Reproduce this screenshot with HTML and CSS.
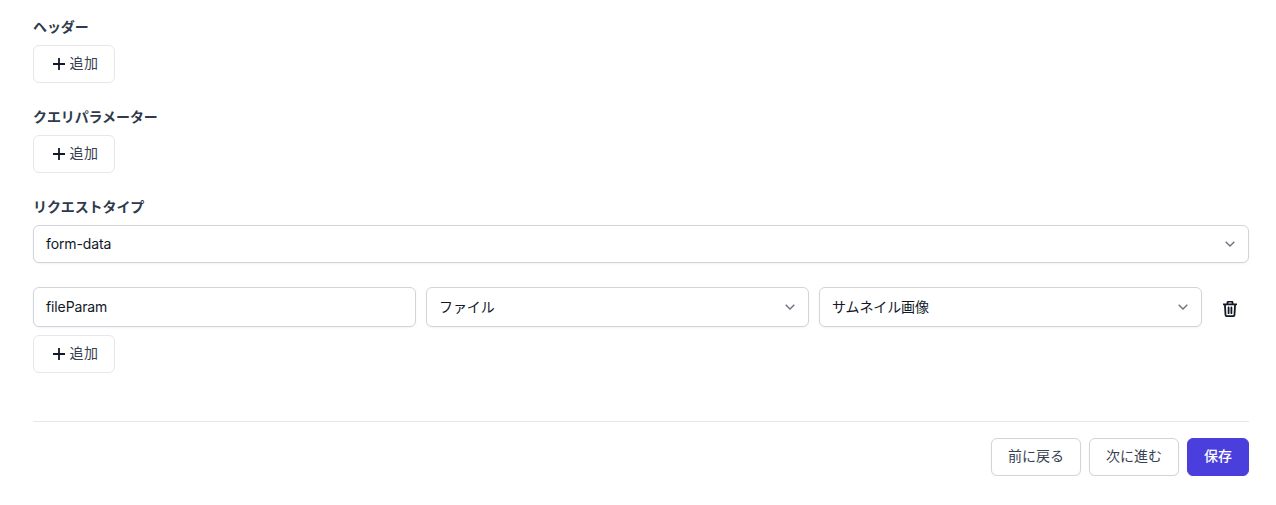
FILE: index.html
```html
<!DOCTYPE html>
<html lang="ja">
<head>
    <meta charset="UTF-8">
    <title>リクエスト設定</title>
    <link rel="stylesheet" href="styles.css">
</head>
<body>
    <div class="container">
        <div class="field-group">
            <div class="field-label">ヘッダー</div>
            <button class="add-btn">
                <svg class="plus-icon" viewBox="0 0 14 14"><path d="M7 1v12M1 7h12"/></svg>
                <span class="btn-text">追加</span>
            </button>
        </div>

        <div class="field-group">
            <div class="field-label">クエリパラメーター</div>
            <button class="add-btn">
                <svg class="plus-icon" viewBox="0 0 14 14"><path d="M7 1v12M1 7h12"/></svg>
                <span class="btn-text">追加</span>
            </button>
        </div>

        <div class="field-group">
            <div class="field-label">リクエストタイプ</div>
            <div class="select full">
                <span class="value">form-data</span>
                <svg class="chevron" viewBox="0 0 10 6"><path d="M.7.8 5 5 9.300.8"/></svg>
            </div>
        </div>

        <div class="param-row">
            <div class="text-input"><span class="value">fileParam</span></div>
            <div class="select">
                <span class="value">ファイル</span>
                <svg class="chevron" viewBox="0 0 10 6"><path d="M.7.8 5 5 9.300.8"/></svg>
            </div>
            <div class="select">
                <span class="value">サムネイル画像</span>
                <svg class="chevron" viewBox="0 0 10 6"><path d="M.7.8 5 5 9.300.8"/></svg>
            </div>
            <button class="delete-btn">
                <svg class="trash-icon" viewBox="0 0 14 16">
                    <path d="M.5 3.300h13M4.500 3.300V1.600c0-.5.4-.9.9-.9h3.200c.5 0 .9.4.9.9v1.700M1.900 3.300l.6 10.400c0 .8.7 1.500 1.500 1.500h6c.8 0 1.500-.7 1.500-1.500l.6-10.400M5.600 6.500v5.700M8.400 6.500v5.700"/>
                </svg>
            </button>
        </div>
        <button class="add-btn">
            <svg class="plus-icon" viewBox="0 0 14 14"><path d="M7 1v12M1 7h12"/></svg>
            <span class="btn-text">追加</span>
        </button>

        <div class="footer">
            <button class="footer-btn"><span class="btn-text">前に戻る</span></button>
            <button class="footer-btn"><span class="btn-text">次に進む</span></button>
            <button class="footer-btn primary"><span class="btn-text">保存</span></button>
        </div>
    </div>
</body>
</html>
```

FILE: styles.css
```css
* {
    box-sizing: border-box;
}

body {
    margin: 0;
    background: white;
    font-family: Inter, "Noto Sans CJK JP", sans-serif;
    font-size: 14px;
    color: #111827;
}

.container {
    padding: 17px 27px 0 33px;
}

.field-group {
    margin-bottom: 24px;
}

.field-label {
    height: 20px;
    line-height: 19px;
    margin-bottom: 8px;
    font-weight: 600;
    letter-spacing: -0.1px;
    color: #2f3a4c;
}

.add-btn {
    display: flex;
    align-items: center;
    justify-content: center;
    gap: 4px;
    width: 82px;
    height: 38px;
    padding: 0 0 0 2px;
    background: white;
    border: 1px solid #e5e7eb;
    border-radius: 6px;
    font: inherit;
    color: #374151;
}

.btn-text {
    display: block;
    padding-bottom: 2px;
    line-height: 18px;
}

.add-btn .btn-text {
    letter-spacing: 0.4px;
}

.plus-icon {
    width: 14px;
    height: 14px;
    fill: none;
    stroke: #111827;
    stroke-width: 1.8;
}

.select, .text-input {
    display: flex;
    align-items: center;
    justify-content: space-between;
    height: 38px;
    padding: 0 12px;
    background: white;
    border: 1px solid #d1d5db;
    border-radius: 6px;
    box-shadow: 0 1px 2px rgba(0,0,0,0.05);
}

.value {
    display: block;
    padding-bottom: 1px;
    line-height: 18px;
    letter-spacing: -0.12px;
}

.chevron {
    width: 10px;
    height: 6px;
    margin-right: 1px;
    fill: none;
    stroke: #6b7280;
    stroke-width: 1.4;
}

.param-row {
    display: grid;
    grid-template-columns: 1fr 1fr 1fr 37px;
    gap: 10px;
    margin-bottom: 8px;
}

.param-row .select, .param-row .text-input {
    height: 40px;
}

.delete-btn {
    display: flex;
    align-items: center;
    justify-content: center;
    padding: 4px 1px 0 0;
    background: none;
    border: none;
}

.trash-icon {
    width: 14px;
    height: 16px;
    fill: none;
    stroke: #111827;
    stroke-width: 1.8;
    stroke-linecap: round;
    stroke-linejoin: round;
}

.footer {
    display: flex;
    justify-content: flex-end;
    gap: 8px;
    margin-top: 48px;
    padding-top: 16px;
    border-top: 1px solid #e5e7eb;
}

.footer-btn {
    width: 90px;
    height: 38px;
    padding: 0;
    background: white;
    border: 1px solid #d1d5db;
    border-radius: 6px;
    font: inherit;
    color: #374151;
    box-shadow: 0 1px 2px rgba(0,0,0,0.05);
}

.footer-btn.primary {
    width: 62px;
    background: #4a3fdc;
    border-color: #4a3fdc;
    color: white;
    font-weight: 500;
}
```
